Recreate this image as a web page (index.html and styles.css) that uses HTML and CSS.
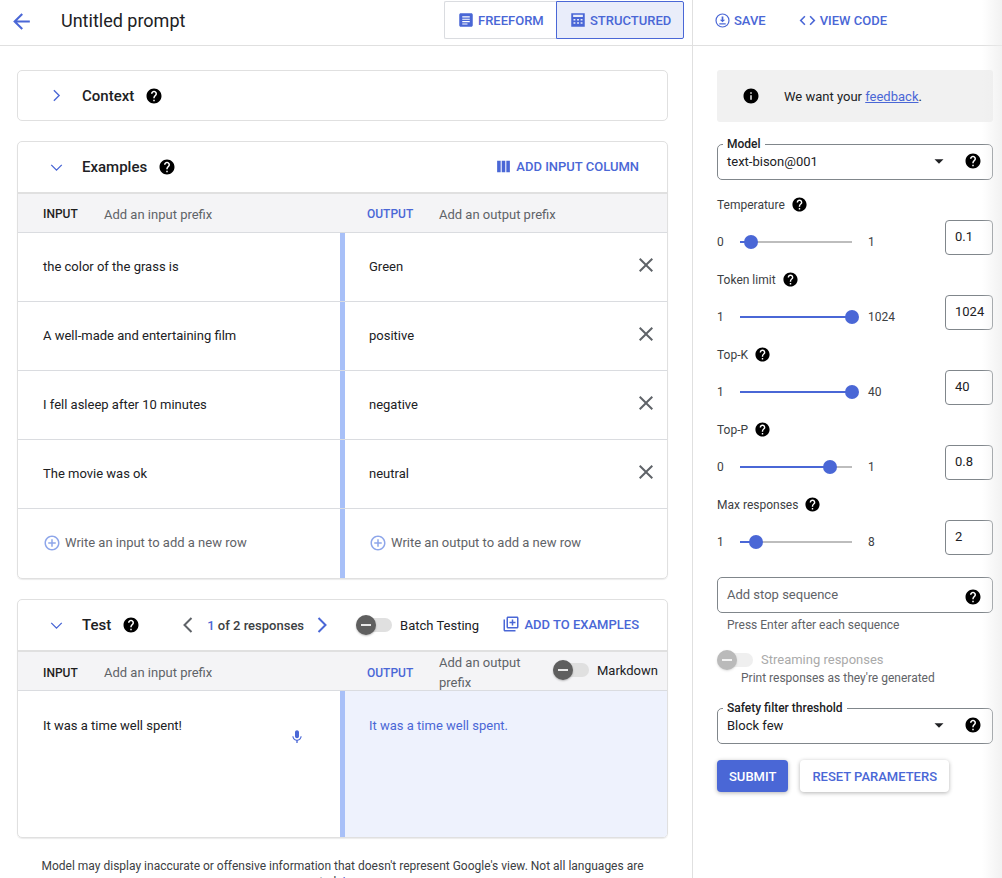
FILE: index.html
```html
<!DOCTYPE html>
<html lang="en">
<head>
    <meta charset="UTF-8">
    <meta name="viewport" content="width=device-width, initial-scale=1.0">
    <title>Untitled prompt</title>
    <link rel="stylesheet" href="styles.css">
</head>
<body>
    <svg class="sprites" width="0" height="0">
        <symbol id="i-help" viewBox="0 0 24 24"><path d="M12 2C6.48 2 2 6.48 2 12s4.48 10 10 10 10-4.48 10-10S17.52 2 12 2zm1 17h-2v-2h2v2zm2.07-7.75l-.9.92C13.45 12.9 13 13.5 13 15h-2v-.5c0-1.1.45-2.1 1.17-2.83l1.24-1.26c.37-.36.59-.86.59-1.41 0-1.1-.9-2-2-2s-2 .9-2 2H8c0-2.21 1.79-4 4-4s4 1.79 4 4c0 .88-.36 1.68-.93 2.25z"/></symbol>
        <symbol id="i-close" viewBox="0 0 24 24"><path d="M19 6.41L17.59 5 12 10.59 6.41 5 5 6.41 10.59 12 5 17.59 6.41 19 12 13.41 17.59 19 19 17.59 13.41 12z"/></symbol>
        <symbol id="i-add" viewBox="0 0 24 24"><path d="M13 7h-2v4H7v2h4v4h2v-4h4v-2h-4V7zm-1-5C6.48 2 2 6.48 2 12s4.48 10 10 10 10-4.48 10-10S17.52 2 12 2zm0 18c-4.41 0-8-3.59-8-8s3.59-8 8-8 8 3.59 8 8-3.59 8-8 8z"/></symbol>
        <symbol id="i-drop" viewBox="0 0 24 24"><path d="M6 9.5l6 6 6-6z"/></symbol>
        <symbol id="i-down" viewBox="0 0 24 24"><path d="M6 9l6 6 6-6" fill="none" stroke="currentColor" stroke-width="1.6"/></symbol>
    </svg>

    <header class="topbar">
        <div class="topbar-left">
            <svg class="icon back" viewBox="0 0 24 24"><path d="M20 11H7.83l5.59-5.59L12 4l-8 8 8 8 1.41-1.41L7.83 13H20v-2z"/></svg>
            <h1>Untitled prompt</h1>
            <div class="mode-switch">
                <button class="mode">
                    <svg class="icon" viewBox="0 0 24 24"><path d="M19 3H5c-1.1 0-2 .9-2 2v14c0 1.1.9 2 2 2h14c1.1 0 2-.9 2-2V5c0-1.1-.9-2-2-2zM7 7h10v1.5H7V7zm0 3.2h10v1.5H7v-1.5zm0 3.2h10v1.5H7v-1.5zm0 3.1h7V18H7v-1.5z"/></svg>
                    FREEFORM
                </button>
                <button class="mode mode-on">
                    <svg class="icon" viewBox="0 0 24 24"><path d="M3 3h18v18H3V3zm2.5 2v3h13V5h-13zM6 10.5v2h2.5v-2H6zm4.8 0v2h2.5v-2h-2.5zm4.7 0v2H18v-2h-2.5zM6 15v2h2.5v-2H6zm4.8 0v2h2.5v-2h-2.5zm4.7 0v2H18v-2h-2.5z"/></svg>
                    STRUCTURED
                </button>
            </div>
        </div>
        <div class="topbar-right">
            <a class="action">
                <svg class="icon" viewBox="0 0 24 24"><path d="M12 2a10 10 0 1 0 0 20 10 10 0 0 0 0-20zm0 18.3a8.3 8.3 0 1 1 0-16.6 8.3 8.3 0 0 1 0 16.6zM10.8 6.5h2.4v4.3h2.6L12 14.5l-3.8-3.7h2.6V6.5zM7.5 16h9v1.7h-9V16z"/></svg>
                SAVE
            </a>
            <a class="action action-code">
                <svg class="icon" viewBox="0 0 24 24"><path d="M9.4 16.6L4.8 12l4.6-4.6L8 6l-6 6 6 6 1.4-1.4zm5.2 0l4.6-4.6-4.6-4.6L16 6l6 6-6 6-1.4-1.4z"/></svg>
                VIEW CODE
            </a>
        </div>
    </header>

    <div class="layout">
        <main class="editor">
            <section class="card card-context">
                <div class="card-head">
                    <svg class="icon chevron" viewBox="0 0 24 24"><path d="M9 6l6 6-6 6" fill="none" stroke="currentColor" stroke-width="1.6"/></svg>
                    <h2>Context</h2>
                    <svg class="icon help"><use href="#i-help"/></svg>
                </div>
            </section>

            <section class="card">
                <div class="card-head">
                    <svg class="icon chevron"><use href="#i-down"/></svg>
                    <h2>Examples</h2>
                    <svg class="icon help"><use href="#i-help"/></svg>
                    <a class="action add-column">
                        <svg class="icon" viewBox="0 0 24 24"><path d="M3 4h5v16H3V4zm6.5 0h5v16h-5V4zM16 4h5v16h-5V4z"/></svg>
                        ADD INPUT COLUMN
                    </a>
                </div>
                <div class="prefix-row">
                    <div class="prefix-cell"><b>INPUT</b><span class="hint">Add an input prefix</span></div>
                    <div class="prefix-cell prefix-out"><b>OUTPUT</b><span class="hint">Add an output prefix</span></div>
                </div>
                <div class="row">
                    <div class="cell">the color of the grass is</div>
                    <div class="cell cell-out">Green<svg class="icon remove"><use href="#i-close"/></svg></div>
                </div>
                <div class="row">
                    <div class="cell">A well-made and entertaining film</div>
                    <div class="cell cell-out">positive<svg class="icon remove"><use href="#i-close"/></svg></div>
                </div>
                <div class="row">
                    <div class="cell">I fell asleep after 10 minutes</div>
                    <div class="cell cell-out">negative<svg class="icon remove"><use href="#i-close"/></svg></div>
                </div>
                <div class="row">
                    <div class="cell">The movie was ok</div>
                    <div class="cell cell-out">neutral<svg class="icon remove"><use href="#i-close"/></svg></div>
                </div>
                <div class="row row-new">
                    <div class="cell hint"><svg class="icon add"><use href="#i-add"/></svg>Write an input to add a new row</div>
                    <div class="cell cell-out hint"><svg class="icon add"><use href="#i-add"/></svg>Write an output to add a new row</div>
                </div>
            </section>

            <section class="card">
                <div class="card-head">
                    <svg class="icon chevron"><use href="#i-down"/></svg>
                    <h2>Test</h2>
                    <svg class="icon help"><use href="#i-help"/></svg>
                    <div class="pager">
                        <svg class="icon pager-prev" viewBox="0 0 24 24"><path d="M15.5 5l-7 7 7 7" fill="none" stroke="currentColor" stroke-width="2"/></svg>
                        <span><em>1</em> of 2 responses</span>
                        <svg class="icon pager-next" viewBox="0 0 24 24"><path d="M8.5 5l7 7-7 7" fill="none" stroke="currentColor" stroke-width="2"/></svg>
                    </div>
                    <div class="switch switch-batch"><i class="knob"></i><span>Batch Testing</span></div>
                    <a class="action add-examples">
                        <svg class="icon" viewBox="0 0 24 24"><path d="M4 6H2v14c0 1.1.9 2 2 2h14v-2H4V6zm16-4H8c-1.1 0-2 .9-2 2v12c0 1.1.9 2 2 2h12c1.1 0 2-.9 2-2V4c0-1.1-.9-2-2-2zm0 14H8V4h12v12zm-7-2h2v-3h3V9h-3V6h-2v3h-3v2h3z"/></svg>
                        ADD TO EXAMPLES
                    </a>
                </div>
                <div class="prefix-row prefix-test">
                    <div class="prefix-cell"><b>INPUT</b><span class="hint">Add an input prefix</span></div>
                    <div class="prefix-cell prefix-out">
                        <b>OUTPUT</b><span class="hint hint-wrap">Add an output prefix</span>
                        <div class="switch switch-md"><i class="knob"></i><span>Markdown</span></div>
                    </div>
                </div>
                <div class="row row-test">
                    <div class="cell">
                        It was a time well spent!
                        <svg class="icon mic" viewBox="0 0 24 24"><path d="M12 14c1.66 0 3-1.34 3-3V5c0-1.66-1.34-3-3-3S9 3.34 9 5v6c0 1.66 1.34 3 3 3zm5.3-3c0 3-2.54 5.1-5.3 5.1S6.7 14 6.7 11H5c0 3.41 2.72 6.23 6 6.72V21h2v-3.28c3.28-.48 6-3.3 6-6.72h-1.7z"/></svg>
                    </div>
                    <div class="cell cell-out cell-result">It was a time well spent.</div>
                </div>
            </section>

            <p class="disclaimer">Model may display inaccurate or offensive information that doesn't represent Google's view. Not all languages are supported. <a>Learn more</a></p>
        </main>

        <aside class="params">
            <div class="feedback">
                <svg class="icon" viewBox="0 0 24 24"><path d="M12 2C6.48 2 2 6.48 2 12s4.48 10 10 10 10-4.48 10-10S17.52 2 12 2zm1 15h-2v-6h2v6zm0-8h-2V7h2v2z"/></svg>
                <span>We want your <a>feedback</a>.</span>
            </div>

            <fieldset class="field field-model">
                <legend>Model</legend>
                <span class="field-value">text-bison@001</span>
                <svg class="icon drop"><use href="#i-drop"/></svg>
                <svg class="icon help"><use href="#i-help"/></svg>
            </fieldset>

            <div class="param param-first">
                <label>Temperature <svg class="icon help"><use href="#i-help"/></svg></label>
                <div class="slider-row">
                    <span class="lim">0</span>
                    <div class="track"><div class="track-fill" style="width: 10%"></div><i class="thumb" style="left: 10%"></i></div>
                    <span class="lim lim-max">1</span>
                    <div class="value">0.1</div>
                </div>
            </div>
            <div class="param">
                <label>Token limit <svg class="icon help"><use href="#i-help"/></svg></label>
                <div class="slider-row">
                    <span class="lim">1</span>
                    <div class="track"><div class="track-fill" style="width: 100%"></div><i class="thumb" style="left: 100%"></i></div>
                    <span class="lim lim-max">1024</span>
                    <div class="value">1024</div>
                </div>
            </div>
            <div class="param">
                <label>Top-K <svg class="icon help"><use href="#i-help"/></svg></label>
                <div class="slider-row">
                    <span class="lim">1</span>
                    <div class="track"><div class="track-fill" style="width: 100%"></div><i class="thumb" style="left: 100%"></i></div>
                    <span class="lim lim-max">40</span>
                    <div class="value">40</div>
                </div>
            </div>
            <div class="param">
                <label>Top-P <svg class="icon help"><use href="#i-help"/></svg></label>
                <div class="slider-row">
                    <span class="lim">0</span>
                    <div class="track"><div class="track-fill" style="width: 80%"></div><i class="thumb" style="left: 80%"></i></div>
                    <span class="lim lim-max">1</span>
                    <div class="value">0.8</div>
                </div>
            </div>
            <div class="param">
                <label>Max responses <svg class="icon help"><use href="#i-help"/></svg></label>
                <div class="slider-row">
                    <span class="lim">1</span>
                    <div class="track"><div class="track-fill" style="width: 14.3%"></div><i class="thumb" style="left: 14.3%"></i></div>
                    <span class="lim lim-max">8</span>
                    <div class="value">2</div>
                </div>
            </div>

            <div class="field field-stop">
                <span class="hint">Add stop sequence</span>
                <svg class="icon help"><use href="#i-help"/></svg>
            </div>
            <p class="helper">Press Enter after each sequence</p>

            <div class="switch switch-stream"><i class="knob"></i><span>Streaming responses</span></div>
            <p class="helper helper-stream">Print responses as they're generated</p>

            <fieldset class="field field-safety">
                <legend>Safety filter threshold</legend>
                <span class="field-value">Block few</span>
                <svg class="icon drop"><use href="#i-drop"/></svg>
                <svg class="icon help"><use href="#i-help"/></svg>
            </fieldset>

            <div class="buttons">
                <button class="btn btn-primary">SUBMIT</button>
                <button class="btn">RESET PARAMETERS</button>
            </div>
        </aside>
    </div>

    <div class="edge-fade"></div>
</body>
</html>
```

FILE: styles.css
```css
* {
    box-sizing: border-box;
}
body {
    margin: 0;
    height: 878px;
    overflow: hidden;
    position: relative;
    font-family: Roboto, "Liberation Sans", sans-serif;
    font-size: 13px;
    color: #1f1f1f;
    background: #fff;
}
a {
    color: #4a67d6;
}
.sprites {
    position: absolute;
}
.icon {
    display: block;
    flex: none;
    width: 18px;
    height: 18px;
    fill: currentColor;
}
.help {
    color: #000;
}
.hint {
    color: #5f6368;
}

/* top bar */
.topbar {
    display: flex;
    height: 46px;
    border-bottom: 1px solid #e0e0e0;
}
.topbar-left {
    display: flex;
    align-items: center;
    width: 693px;
    border-right: 1px solid #e0e0e0;
    padding-left: 9px;
}
.back {
    width: 25px;
    height: 25px;
    margin-top: -3px;
    color: #4a67d6;
}
.topbar h1 {
    margin: -5px 0 0 27px;
    font-size: 18px;
    font-weight: 400;
    color: #202124;
}
.mode-switch {
    display: flex;
    margin-left: auto;
    margin-right: 8px;
    margin-top: -5px;
}
.mode {
    display: flex;
    align-items: center;
    gap: 3px;
    width: 112px;
    height: 38px;
    padding: 0 12px;
    border: 1px solid #dadce0;
    border-right: 0;
    border-radius: 2px 0 0 2px;
    background: #fff;
    color: #4a67d6;
    font: 500 13px Roboto, sans-serif;
}
.mode-on {
    width: 128px;
    border: 1px solid #4a67d6;
    border-radius: 0 2px 2px 0;
    background: #e9edfa;
}
.topbar-right {
    display: flex;
    align-items: center;
    gap: 32px;
    padding-left: 21px;
    margin-top: -5px;
}
.action {
    display: flex;
    align-items: center;
    gap: 3px;
    font-size: 13px;
    font-weight: 500;
    color: #4a67d6;
}
.action .icon {
    width: 17px;
    height: 17px;
}
.action-code .icon {
    width: 19px;
    height: 19px;
}

/* main columns */
.layout {
    display: flex;
}
.editor {
    width: 693px;
    height: 832px;
    padding: 24px 24px 0 17px;
    border-right: 1px solid #e0e0e0;
}
.card {
    width: 651px;
    margin-bottom: 20px;
    border: 1px solid #e0e0e0;
    border-radius: 5px;
    overflow: hidden;
    box-shadow: 0 1px 1px rgba(0, 0, 0, .08);
}
.card-context {
    box-shadow: none;
}
.card-head {
    display: flex;
    align-items: center;
    height: 50px;
    padding-left: 28px;
}
.card-context .card-head {
    height: 49px;
}
.card-head h2 {
    margin: 0 0 0 15px;
    font-size: 15px;
    font-weight: 500;
    color: #202124;
}
.card-head .help {
    margin-left: 11px;
}
.chevron {
    width: 21px;
    height: 21px;
    color: #4a67d6;
}
.add-column {
    margin: -2px 28px 0 auto;
    gap: 4px;
}
.add-examples {
    margin: -2px 28px 0 auto;
    gap: 4px;
}
.add-examples .icon {
    width: 18px;
    height: 18px;
}

/* example and test tables */
.prefix-row {
    display: flex;
    height: 41px;
    padding-top: 2px;
    background: #f4f4f6;
    border-top: 2px solid #e0e0e0;
    border-bottom: 1px solid #dadce0;
}
.prefix-test {
    padding-top: 3px;
}
.prefix-cell {
    display: flex;
    align-items: center;
    width: 322px;
    padding-left: 25px;
}
.prefix-cell b {
    flex: none;
    width: 61px;
    font-size: 12px;
    font-weight: 500;
}
.prefix-out {
    width: 327px;
    padding-left: 27px;
}
.prefix-out b {
    width: 72px;
    color: #4a67d6;
}
.row {
    display: flex;
    height: 69px;
    border-bottom: 1px solid #dadce0;
}
.row-new {
    border-bottom: 0;
}
.row-test {
    height: 146px;
    border-bottom: 0;
}
.cell {
    display: flex;
    align-items: center;
    position: relative;
    width: 322px;
    padding: 0 0 2px 25px;
    color: #202124;
}
.cell-out {
    width: 327px;
    padding-left: 24px;
    border-left: 5px solid #a8c0f8;
}
.remove {
    position: absolute;
    right: 9px;
    top: 20px;
    width: 24px;
    height: 24px;
    color: #5f6368;
}
.row-new .hint {
    color: #5f6368;
}
.add {
    width: 18px;
    height: 18px;
    margin: 0 4px 0 0;
    color: #8ea6ea;
}
.row-test .cell {
    align-items: flex-start;
    padding-top: 27px;
}
.cell-result {
    background: #eef2fd;
    color: #4a67d6;
}
.mic {
    position: absolute;
    left: 271px;
    top: 38px;
    width: 16px;
    height: 16px;
    color: #4a67d6;
}
.pager {
    display: flex;
    align-items: center;
    margin-left: 36px;
    font-weight: 500;
    color: #3c4043;
}
.pager em {
    font-style: normal;
    color: #4a67d6;
}
.pager .icon {
    width: 24px;
    height: 24px;
}
.pager-prev {
    margin-right: 7px;
    color: #5f6368;
}
.pager-next {
    margin-left: 6px;
    color: #4a67d6;
}

/* toggles */
.switch {
    display: flex;
    align-items: center;
    color: #202124;
}
.knob {
    position: relative;
    display: block;
    flex: none;
    width: 36px;
    height: 14px;
    border-radius: 7px;
    background: #e0e0e0;
}
.knob::before {
    content: "";
    position: absolute;
    left: 0;
    top: -3px;
    width: 20px;
    height: 20px;
    border-radius: 50%;
    background: #5f5f5f;
    box-shadow: 0 1px 2px rgba(0, 0, 0, .25);
}
.knob::after {
    content: "";
    position: absolute;
    left: 5px;
    top: 6px;
    width: 10px;
    height: 2px;
    background: #e8e8e8;
}
.switch span {
    margin-left: 8px;
}
.switch-batch {
    margin-left: 22px;
}
.hint-wrap {
    flex: none;
    width: 110px;
    line-height: 20px;
}
.switch-md {
    margin: -5px 0 0 4px;
}
.switch-md span {
    white-space: nowrap;
}

.disclaimer {
    width: 651px;
    margin: 0;
    padding: 0 24px;
    text-align: center;
    font-size: 12px;
    line-height: 16px;
    color: #3c4043;
}

/* right panel */
.params {
    width: 309px;
    padding: 24px 9px 0 24px;
}
.feedback {
    display: flex;
    align-items: center;
    gap: 24px;
    height: 52px;
    padding-left: 25px;
    background: #f1f1f1;
    border-radius: 3px;
    color: #202124;
}
.feedback .icon {
    color: #000;
}
.feedback a {
    text-decoration: underline;
}
.field {
    position: relative;
    display: flex;
    align-items: center;
    margin: 0;
    padding: 0 10px 0 9px;
    border: 1px solid #80868b;
    border-radius: 5px;
}
fieldset.field {
    height: 43px;
    padding-bottom: 8px;
}
.field legend {
    margin-left: -4px;
    padding: 0 4px;
    font-size: 12px;
    font-weight: 500;
    line-height: 14px;
    color: #202124;
}
.field-model {
    margin-top: 15px;
}
.field-value {
    color: #202124;
}
.drop {
    margin-left: auto;
    margin-right: 16px;
    color: #202124;
}
.field-stop {
    justify-content: space-between;
    height: 36px;
    margin-top: 6px;
    padding-bottom: 2px;
}
.field-stop .help {
    margin-top: 5px;
}
.param {
    height: 75px;
}
.param-first {
    margin-top: 16px;
}
.param label {
    display: flex;
    align-items: center;
    gap: 6px;
    height: 18px;
    font-size: 12px;
    color: #3c4043;
}
.param .help {
    width: 17px;
    height: 17px;
    margin-top: -2px;
}
.slider-row {
    display: flex;
    align-items: center;
    height: 35px;
    margin-top: 6px;
    font-size: 12px;
    color: #3c4043;
}
.lim {
    width: 23px;
    margin-top: 9px;
}
.lim-max {
    width: 93px;
    padding-left: 16px;
}
.track {
    position: relative;
    width: 112px;
    height: 2px;
    margin-top: 9px;
    background: #bdbdbd;
}
.track-fill {
    height: 2px;
    background: #4a67d6;
}
.thumb {
    position: absolute;
    top: -6px;
    width: 14px;
    height: 14px;
    margin-left: -7px;
    border-radius: 50%;
    background: #4a67d6;
}
.value {
    width: 48px;
    height: 35px;
    padding: 8px 0 0 9px;
    border: 1px solid #80868b;
    border-radius: 4px;
    font-size: 13px;
    color: #202124;
}
.helper {
    margin: 4px 0 0 10px;
    font-size: 12px;
    line-height: 16px;
    color: #5f6368;
}
.switch-stream {
    margin-top: 19px;
}
.switch-stream .knob {
    opacity: .5;
}
.switch-stream .knob::before {
    background: #777;
}
.switch-stream span {
    color: #aaa;
}
.helper-stream {
    margin: 3px 0 0 24px;
}
.field-safety {
    margin-top: 15px;
}
.buttons {
    display: flex;
    gap: 12px;
    margin-top: 16px;
}
.btn {
    height: 32px;
    padding: 0 12px;
    border: 0;
    border-radius: 4px;
    background: #fff;
    color: #4a67d6;
    font: 500 13px Roboto, sans-serif;
    box-shadow: 0 1px 4px rgba(0, 0, 0, .3);
}
.btn-primary {
    background: #4a67d6;
    color: #fff;
}
.edge-fade {
    position: absolute;
    top: 0;
    right: 0;
    width: 20px;
    height: 100%;
    background: linear-gradient(to right, rgba(236, 236, 236, 0), rgba(236, 236, 236, .7));
    pointer-events: none;
}
```
